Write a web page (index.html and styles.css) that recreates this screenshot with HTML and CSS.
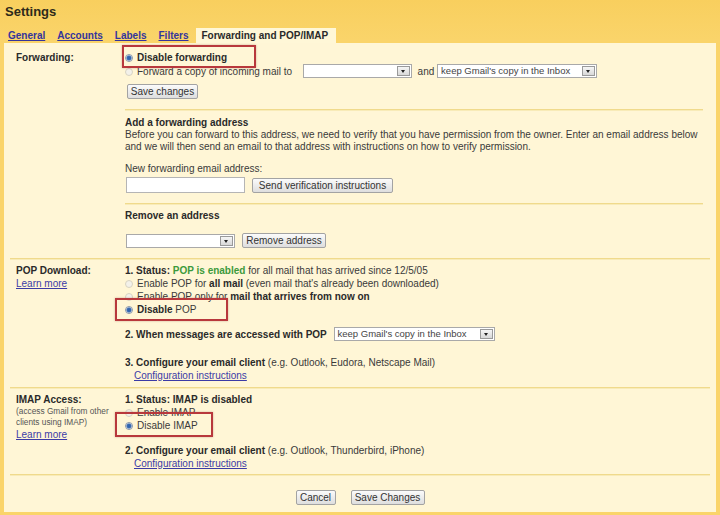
FILE: index.html
```html
<!DOCTYPE html>
<html>
<head>
<meta charset="utf-8">
<link rel="stylesheet" href="styles.css">
</head>
<body>
<div class="page">
  <div class="title">Settings</div>
  <div class="tabs">
    <a class="tab" href="#">General</a>
    <a class="tab" href="#">Accounts</a>
    <a class="tab" href="#">Labels</a>
    <a class="tab" href="#">Filters</a>
    <span class="tab active">Forwarding and POP/IMAP</span>
  </div>
  <div class="panel">
    <div class="row row-fwd">
      <div class="label"><b>Forwarding:</b></div>
      <div class="content">
        <div class="line hlwrap"><span class="radio on"></span><b>Disable forwarding</b><span class="hl hl-fwd"></span></div>
        <div class="line tall"><span class="radio"></span>Forward a copy of incoming mail to <span class="select w109"><span class="arrow"></span></span> and <span class="select w160">keep Gmail's copy in the Inbox<span class="arrow"></span></span></div>
        <div class="btnline save"><span class="btn w71">Save changes</span></div>
        <div class="sep sep-inner"></div>
        <div class="line add-head"><b>Add a forwarding address</b></div>
        <div class="para">Before you can forward to this address, we need to verify that you have permission from the owner. Enter an email address below and we will then send an email to that address with instructions on how to verify permission.</div>
        <div class="line new-label">New forwarding email address:</div>
        <div class="inputline"><span class="input"></span><span class="btn w141">Send verification instructions</span></div>
        <div class="sep sep-inner sep2"></div>
        <div class="line remove-head"><b>Remove an address</b></div>
        <div class="inputline remove-line"><span class="select w109 plain"><span class="arrow"></span></span><span class="btn w84">Remove address</span></div>
      </div>
    </div>
    <div class="sep sep-full"></div>
    <div class="row row-pop">
      <div class="label">
        <div class="line"><b>POP Download:</b></div>
        <div class="line"><a href="#">Learn more</a></div>
      </div>
      <div class="content">
        <div class="line"><b>1. Status: <span class="green">POP is enabled</span></b> for all mail that has arrived since 12/5/05</div>
        <div class="line"><span class="radio"></span>Enable POP for <b>all mail</b> (even mail that's already been downloaded)</div>
        <div class="line"><span class="radio"></span>Enable POP only for <b>mail that arrives from now on</b></div>
        <div class="line hlwrap"><span class="radio on"></span><b>Disable</b> POP<span class="hl hl-pop"></span></div>
        <div class="line tall when"><b>2. When messages are accessed with POP</b> <span class="select w161">keep Gmail's copy in the Inbox<span class="arrow"></span></span></div>
        <div class="line conf"><b>3. Configure your email client</b> (e.g. Outlook, Eudora, Netscape Mail)</div>
        <div class="line indent"><a href="#">Configuration instructions</a></div>
      </div>
    </div>
    <div class="sep sep-full sep-pop"></div>
    <div class="row row-imap">
      <div class="label">
        <div class="line"><b>IMAP Access:</b></div>
        <div class="small">(access Gmail from other</div>
        <div class="small">clients using IMAP)</div>
        <div class="line"><a href="#">Learn more</a></div>
      </div>
      <div class="content">
        <div class="line"><b>1. Status: IMAP is disabled</b></div>
        <div class="line"><span class="radio"></span>Enable IMAP</div>
        <div class="line hlwrap"><span class="radio on"></span>Disable IMAP<span class="hl hl-imap"></span></div>
        <div class="line conf2"><b>2. Configure your email client</b> (e.g. Outlook, Thunderbird, iPhone)</div>
        <div class="line indent"><a href="#">Configuration instructions</a></div>
      </div>
    </div>
    <div class="sep sep-full sep-imap"></div>
    <div class="actions">
      <span class="btn w40">Cancel</span>
      <span class="btn w74">Save Changes</span>
    </div>
  </div>
</div>
</body>
</html>
```

FILE: styles.css
```css
* { box-sizing: border-box; }
html, body { margin: 0; padding: 0; }
body {
  width: 720px;
  height: 515px;
  overflow: hidden;
  background: #f9d264;
  font-family: "Liberation Sans", Arial, sans-serif;
  font-size: 10px;
  color: #3a3a3a;
}
b { color: #2a2a2a; }
a { color: #3b3ba6; text-decoration: underline; }

.page {
  background: linear-gradient(#f8cf5e, #fad46a 40px);
  height: 515px;
}

.title {
  padding: 4px 0 0 5px;
  height: 28px;
  font-size: 13px;
  font-weight: bold;
  color: #2e2a1a;
  line-height: 16px;
}

.tabs {
  display: flex;
  align-items: flex-end;
  height: 15px;
  padding-left: 2px;
  font-size: 10px;
  font-weight: bold;
  white-space: nowrap;
}
.tab {
  padding: 0 6px;
  line-height: 15px;
}
a.tab { color: #34349c; }
.tab.active {
  margin-left: 1px;
  padding: 0 8px 0 6px;
  background: #fff7d7;
  color: #2a2a2a;
}

.panel {
  margin: 0 4px;
  height: 469px;
  background: #fff6d6;
  padding-top: 8px;
}

.row {
  display: grid;
  grid-template-columns: 121px 1fr;
}
.label {
  padding-left: 12px;
  line-height: 13px;
}
.content { padding-right: 13px; }

.line {
  line-height: 13px;
  height: 13px;
  white-space: nowrap;
}
.line.tall { height: 15px; line-height: 15px; }
.hlwrap { position: relative; }

.radio {
  display: inline-block;
  vertical-align: -1px;
  width: 8px;
  height: 8px;
  border-radius: 50%;
  border: 1px solid #d8d3c2;
  background: #f3f1ea;
  margin: 0 4px 0 0;
}
.radio.on {
  border-color: #8c97a8;
  background: radial-gradient(circle at 50% 50%, #2d5fa8 0, #3a6db5 2px, #dfe6ee 3px, #f4f4f4 4px);
}

.hl {
  position: absolute;
  border: 2px solid #b8383c;
  box-shadow: 0 0 2px rgba(120, 40, 40, 0.35);
  pointer-events: none;
}
.hl-fwd { left: -3px; top: -6px; width: 134px; height: 23px; }
.hl-pop { left: -10px; top: -5px; width: 113px; height: 23px; }
.hl-imap { left: -10px; top: -7px; width: 98px; height: 25px; }

.select {
  display: inline-block;
  vertical-align: middle;
  position: relative;
  height: 14px;
  border: 1px solid #a9a9a9;
  background: #fff;
  padding: 0 16px 0 3px;
  margin: -2px 3px 0 4px;
  line-height: 12px;
  font-size: 9.5px;
  color: #444;
}
.select.w109 { margin-left: 8px; }
.select.w160 { margin-left: 0; }
.select.plain { margin: 0; }
.arrow {
  position: absolute;
  right: 1px;
  top: 1px;
  width: 13px;
  height: 10px;
  border: 1px solid #9a9a9a;
  background: linear-gradient(#f6f6f6, #d8d8d8);
}
.arrow::after {
  content: "";
  position: absolute;
  left: 3px;
  top: 3px;
  border-left: 2.5px solid transparent;
  border-right: 2.5px solid transparent;
  border-top: 3px solid #222;
}
.w109 { width: 109px; }
.w160 { width: 160px; }
.w161 { width: 161px; }

.btn {
  display: inline-flex;
  align-items: center;
  justify-content: center;
  height: 15px;
  border: 1px solid #a3a3a3;
  border-radius: 2px;
  background: linear-gradient(#fbfbfb, #dedede);
  color: #333;
  font-size: 10px;
  white-space: nowrap;
}
.w71 { width: 71px; }
.w141 { width: 141px; }
.w84 { width: 84px; }
.w40 { width: 40px; }
.w74 { width: 74px; }

.btnline { margin-top: 5px; padding-left: 2px; height: 15px; display: flex; }

.sep {
  height: 2px;
  background: #f0da8c;
  border-bottom: 1px solid #f8ebb8;
}
.sep-inner { margin-top: 10px; }
.add-head { margin-top: 5px; }
.para {
  line-height: 12px;
  white-space: normal;
}
.new-label { margin-top: 9px; }
.inputline {
  display: flex;
  align-items: center;
  gap: 7px;
  margin-top: 2px;
  padding-left: 1px;
  height: 16px;
}
.input {
  display: inline-block;
  width: 119px;
  height: 16px;
  border: 1px solid #b5b5b5;
  background: #fff;
}
.sep2 { margin-top: 10px; }
.remove-head { margin-top: 4px; }
.remove-line { margin-top: 11px; height: 15px; }

.sep-full { margin: 10px 6px 0 6px; }
.row-pop { padding-top: 4px; }
.green { color: #3c9a3c; }
.when { margin-top: 11px; }
.conf { margin-top: 14px; }
.indent { padding-left: 9px; }
.sep-pop { margin-top: 5px; }
.row-imap { padding-top: 4px; }
.small {
  font-size: 8.3px;
  line-height: 11px;
  color: #555;
}
.conf2 { margin-top: 12px; }
.sep-imap { margin-top: 4px; }

.actions {
  display: flex;
  justify-content: center;
  gap: 15px;
  margin-top: 14px;
}
```
